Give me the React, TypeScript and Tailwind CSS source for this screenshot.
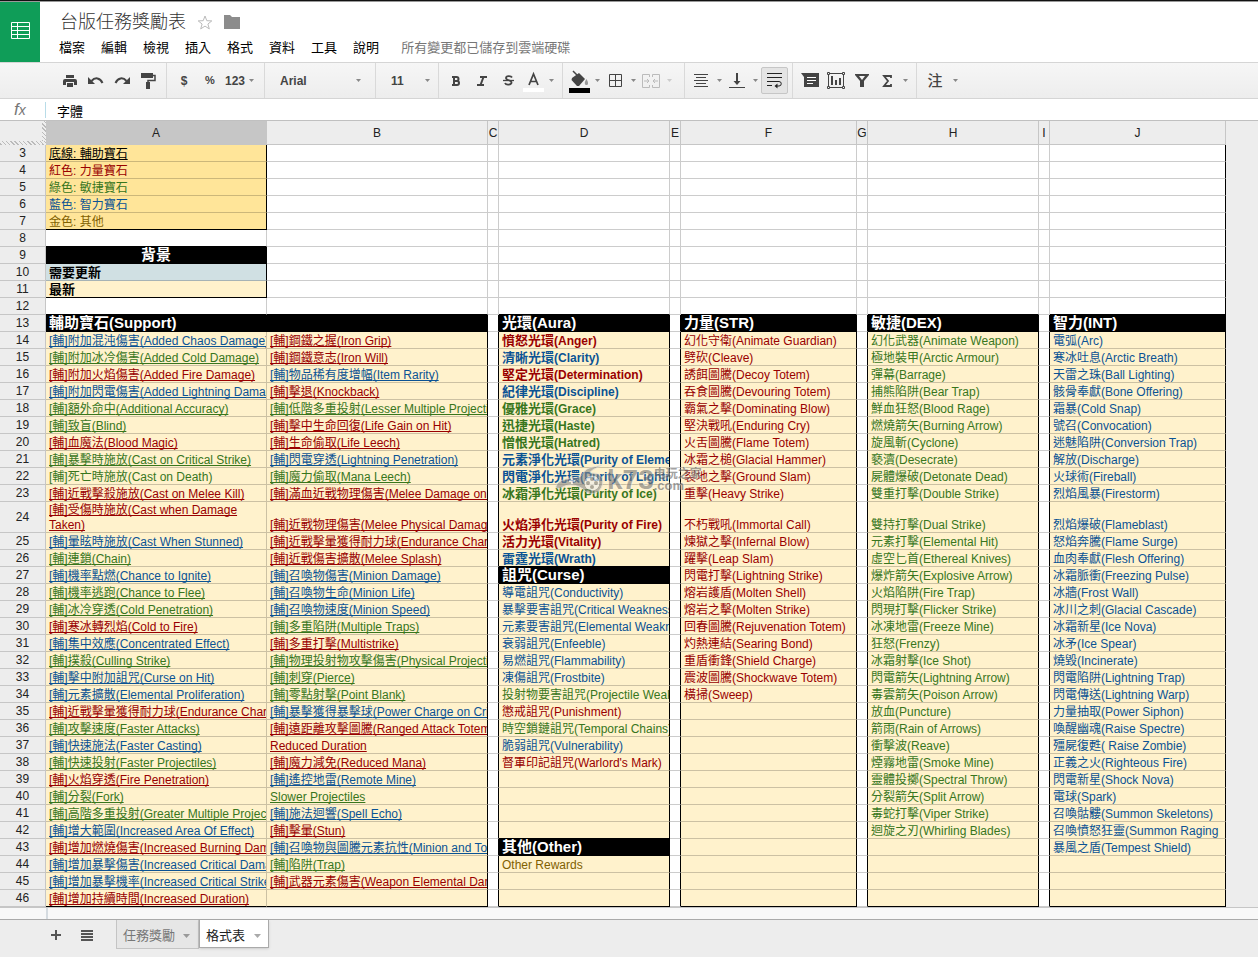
import type { ReactNode } from "react";

type Entry = string | null;

const FIRST_ROW = 3;
const LAST_ROW = 46;

const COLUMNS = [
  { name: "A", width: "w-[221px]" },
  { name: "B", width: "w-[221px]" },
  { name: "C", width: "w-[11px]" },
  { name: "D", width: "w-[171px]" },
  { name: "E", width: "w-[11px]" },
  { name: "F", width: "w-[176px]" },
  { name: "G", width: "w-[11px]" },
  { name: "H", width: "w-[171px]" },
  { name: "I", width: "w-[11px]" },
  { name: "J", width: "w-[176px]" },
];

// Entries start with a colour code: r = strength, g = dexterity, b = intelligence, y = other.
const INK: Record<string, string> = {
  r: "text-[#990000]",
  g: "text-[#38761d]",
  b: "text-[#0b5394]",
  y: "text-[#7f6000]",
  k: "text-black",
};

// Each list starts at row 14.
const SUPPORT_A: Entry[] = [
  "b[輔]附加混沌傷害(Added Chaos Damage)",
  "g[輔]附加冰冷傷害(Added Cold Damage)",
  "r[輔]附加火焰傷害(Added Fire Damage)",
  "b[輔]附加閃電傷害(Added Lightning Damage)",
  "g[輔]額外命中(Additional Accuracy)",
  "g[輔]致盲(Blind)",
  "r[輔]血魔法(Blood Magic)",
  "g[輔]暴擊時施放(Cast on Critical Strike)",
  "g[輔]死亡時施放(Cast on Death)",
  "r[輔]近戰擊殺施放(Cast on Melee Kill)",
  "r[輔]受傷時施放(Cast when Damage Taken)",
  "b[輔]暈眩時施放(Cast When Stunned)",
  "g[輔]連鎖(Chain)",
  "b[輔]機率點燃(Chance to Ignite)",
  "g[輔]機率逃跑(Chance to Flee)",
  "g[輔]冰冷穿透(Cold Penetration)",
  "r[輔]寒冰轉烈焰(Cold to Fire)",
  "b[輔]集中效應(Concentrated Effect)",
  "g[輔]撲殺(Culling Strike)",
  "b[輔]擊中附加詛咒(Curse on Hit)",
  "b[輔]元素擴散(Elemental Proliferation)",
  "r[輔]近戰擊暈獲得耐力球(Endurance Charge)",
  "g[輔]攻擊速度(Faster Attacks)",
  "b[輔]快速施法(Faster Casting)",
  "g[輔]快速投射(Faster Projectiles)",
  "r[輔]火焰穿透(Fire Penetration)",
  "g[輔]分裂(Fork)",
  "g[輔]高階多重投射(Greater Multiple Projectiles)",
  "b[輔]增大範圍(Increased Area Of Effect)",
  "r[輔]增加燃燒傷害(Increased Burning Damage)",
  "b[輔]增加暴擊傷害(Increased Critical Damage)",
  "b[輔]增加暴擊機率(Increased Critical Strikes)",
  "r[輔]增加持續時間(Increased Duration)",
];

const SUPPORT_B: Entry[] = [
  "r[輔]鋼鐵之握(Iron Grip)",
  "r[輔]鋼鐵意志(Iron Will)",
  "b[輔]物品稀有度增幅(Item Rarity)",
  "r[輔]擊退(Knockback)",
  "g[輔]低階多重投射(Lesser Multiple Projectiles)",
  "r[輔]擊中生命回復(Life Gain on Hit)",
  "r[輔]生命偷取(Life Leech)",
  "b[輔]閃電穿透(Lightning Penetration)",
  "g[輔]魔力偷取(Mana Leech)",
  "r[輔]滿血近戰物理傷害(Melee Damage on Full Life)",
  "r[輔]近戰物理傷害(Melee Physical Damage)",
  "r[輔]近戰擊暈獲得耐力球(Endurance Charge)",
  "r[輔]近戰傷害擴散(Melee Splash)",
  "b[輔]召喚物傷害(Minion Damage)",
  "b[輔]召喚物生命(Minion Life)",
  "b[輔]召喚物速度(Minion Speed)",
  "g[輔]多重陷阱(Multiple Traps)",
  "r[輔]多重打擊(Multistrike)",
  "g[輔]物理投射物攻擊傷害(Physical Projectile)",
  "g[輔]刺穿(Pierce)",
  "g[輔]零點射擊(Point Blank)",
  "b[輔]暴擊獲得暴擊球(Power Charge on Critical)",
  "r[輔]遠距離攻擊圖騰(Ranged Attack Totem)",
  "rReduced Duration",
  "r[輔]魔力減免(Reduced Mana)",
  "b[輔]遙控地雷(Remote Mine)",
  "gSlower Projectiles",
  "b[輔]施法迴響(Spell Echo)",
  "r[輔]擊暈(Stun)",
  "b[輔]召喚物與圖騰元素抗性(Minion and Totem)",
  "g[輔]陷阱(Trap)",
  "r[輔]武器元素傷害(Weapon Elemental Damage)",
];

const AURA_D: Entry[] = [
  "r憤怒光環(Anger)",
  "b清晰光環(Clarity)",
  "r堅定光環(Determination)",
  "b紀律光環(Discipline)",
  "g優雅光環(Grace)",
  "g迅捷光環(Haste)",
  "g憎恨光環(Hatred)",
  "b元素淨化光環(Purity of Elements)",
  "b閃電淨化光環(Purity of Lightning)",
  "g冰霜淨化光環(Purity of Ice)",
  "r火焰淨化光環(Purity of Fire)",
  "r活力光環(Vitality)",
  "b雷霆光環(Wrath)",
  "#詛咒(Curse)",
  "b導電詛咒(Conductivity)",
  "b暴擊要害詛咒(Critical Weakness)",
  "b元素要害詛咒(Elemental Weakness)",
  "b衰弱詛咒(Enfeeble)",
  "b易燃詛咒(Flammability)",
  "b凍傷詛咒(Frostbite)",
  "g投射物要害詛咒(Projectile Weakness)",
  "r懲戒詛咒(Punishment)",
  "g時空鎖鏈詛咒(Temporal Chains)",
  "b脆弱詛咒(Vulnerability)",
  "r督軍印記詛咒(Warlord's Mark)",
  null,
  null,
  null,
  null,
  "#其他(Other)",
  "yOther Rewards",
];

const STRENGTH_F: Entry[] = [
  "r幻化守衛(Animate Guardian)",
  "r劈砍(Cleave)",
  "r誘餌圖騰(Decoy Totem)",
  "r吞食圖騰(Devouring Totem)",
  "r霸氣之擊(Dominating Blow)",
  "r堅決戰吼(Enduring Cry)",
  "r火舌圖騰(Flame Totem)",
  "r冰霜之槌(Glacial Hammer)",
  "r裂地之擊(Ground Slam)",
  "r重擊(Heavy Strike)",
  "r不朽戰吼(Immortal Call)",
  "r煉獄之擊(Infernal Blow)",
  "r躍擊(Leap Slam)",
  "r閃電打擊(Lightning Strike)",
  "r熔岩護盾(Molten Shell)",
  "r熔岩之擊(Molten Strike)",
  "r回春圖騰(Rejuvenation Totem)",
  "r灼熱連結(Searing Bond)",
  "r重盾衝鋒(Shield Charge)",
  "r震波圖騰(Shockwave Totem)",
  "r橫掃(Sweep)",
];

const DEXTERITY_H: Entry[] = [
  "g幻化武器(Animate Weapon)",
  "g極地裝甲(Arctic Armour)",
  "g彈幕(Barrage)",
  "g捕熊陷阱(Bear Trap)",
  "g鮮血狂怒(Blood Rage)",
  "g燃燒箭矢(Burning Arrow)",
  "g旋風斬(Cyclone)",
  "g褻瀆(Desecrate)",
  "g屍體爆破(Detonate Dead)",
  "g雙重打擊(Double Strike)",
  "g雙持打擊(Dual Strike)",
  "g元素打擊(Elemental Hit)",
  "g虛空匕首(Ethereal Knives)",
  "g爆炸箭矢(Explosive Arrow)",
  "g火焰陷阱(Fire Trap)",
  "g閃現打擊(Flicker Strike)",
  "g冰凍地雷(Freeze Mine)",
  "g狂怒(Frenzy)",
  "g冰霜射擊(Ice Shot)",
  "g閃電箭矢(Lightning Arrow)",
  "g毒雲箭矢(Poison Arrow)",
  "g放血(Puncture)",
  "g箭雨(Rain of Arrows)",
  "g衝擊波(Reave)",
  "g煙霧地雷(Smoke Mine)",
  "g靈體投擲(Spectral Throw)",
  "g分裂箭矢(Split Arrow)",
  "g毒蛇打擊(Viper Strike)",
  "g迴旋之刃(Whirling Blades)",
];

const INTELLIGENCE_J: Entry[] = [
  "b電弧(Arc)",
  "b寒冰吐息(Arctic Breath)",
  "b天雷之珠(Ball Lighting)",
  "b骸骨奉獻(Bone Offering)",
  "b霜暴(Cold Snap)",
  "b號召(Convocation)",
  "b迷魅陷阱(Conversion Trap)",
  "b解放(Discharge)",
  "b火球術(Fireball)",
  "b烈焰風暴(Firestorm)",
  "b烈焰爆破(Flameblast)",
  "b怒焰奔騰(Flame Surge)",
  "b血肉奉獻(Flesh Offering)",
  "b冰霜脈衝(Freezing Pulse)",
  "b冰牆(Frost Wall)",
  "b冰川之刺(Glacial Cascade)",
  "b冰霜新星(Ice Nova)",
  "b冰矛(Ice Spear)",
  "b燒毀(Incinerate)",
  "b閃電陷阱(Lightning Trap)",
  "b閃電傳送(Lightning Warp)",
  "b力量抽取(Power Siphon)",
  "b喚醒幽魂(Raise Spectre)",
  "b殭屍復甦( Raise Zombie)",
  "b正義之火(Righteous Fire)",
  "b閃電新星(Shock Nova)",
  "b電球(Spark)",
  "b召喚骷髏(Summon Skeletons)",
  "b召喚憤怒狂靈(Summon Raging",
  "b暴風之盾(Tempest Shield)",
];

const LISTS: Record<string, Entry[]> = {
  A: SUPPORT_A,
  B: SUPPORT_B,
  D: AURA_D,
  F: STRENGTH_F,
  H: DEXTERITY_H,
  J: INTELLIGENCE_J,
};

const TITLES: Record<string, string> = {
  A: "#輔助寶石(Support)",
  D: "#光環(Aura)",
  F: "#力量(STR)",
  H: "#敏捷(DEX)",
  J: "#智力(INT)",
};

const LEGEND: Record<number, string> = {
  3: "k底線: 輔助寶石",
  4: "r紅色: 力量寶石",
  5: "g綠色: 敏捷寶石",
  6: "b藍色: 智力寶石",
  7: "y金色: 其他",
  9: "#背景",
  10: "k需要更新",
  11: "k最新",
};

function entryAt(col: string, row: number): Entry {
  if (row < 13) return col === "A" ? (LEGEND[row] ?? null) : null;
  if (row === 13) return TITLES[col] ?? null;
  return LISTS[col]?.[row - 14] ?? null;
}

function fillAt(col: string, row: number) {
  if (entryAt(col, row)?.startsWith("#")) return "bg-black";
  if (row >= 14) return LISTS[col] ? "bg-[#fff2cc]" : "bg-white";
  if (col === "A" && row <= 7) return "bg-[#ffe599]";
  if (col === "A" && row === 10) return "bg-[#d0e0e3]";
  if (col === "A" && row === 11) return "bg-[#fff2cc]";
  return "bg-white";
}

function bordersAt(col: string, row: number) {
  const boxed =
    (row >= 13 && col !== "A") ||
    (col === "A" && row <= 11 && row !== 8) ||
    (col === "J" && row < 13);
  const header = entryAt(col, row)?.startsWith("#");
  const aboveHeader =
    entryAt(col, row + 1)?.startsWith("#") || (row === 12 && col === "B");
  const closing =
    (col === "A" && (row === 7 || row === 11)) ||
    (row === LAST_ROW && LISTS[col] !== undefined);
  const right = boxed || header ? "border-r-black" : "border-r-black/20";
  const bottom =
    header || aboveHeader || closing ? "border-b-black" : "border-b-black/20";
  return `${right} ${bottom}`;
}

function CellText({ col, row }: { col: string; row: number }) {
  const entry = entryAt(col, row);
  if (!entry) return null;
  const kind = entry[0];
  const text = entry.slice(1);
  const cut = text.indexOf("(") < 0 ? text.length : text.indexOf("(");

  if (kind === "#") {
    return (
      <div
        className={`h-4 overflow-hidden px-[3px] text-[15px] leading-4 font-bold whitespace-nowrap text-white ${row === 9 ? "text-center" : ""}`}
      >
        {text}
      </div>
    );
  }
  const wraps = col === "A" && row === 24;
  const underlined =
    row === 3 || ((col === "A" || col === "B") && row > 13 && !(col === "A" && row === 22));
  const bold = (col === "D" && row < 27) || row === 10 || row === 11;
  return (
    <div
      className={`overflow-hidden px-[3px] text-[12px] ${wraps ? "h-[30px] pt-px leading-[15px]" : "h-4 leading-[18px] whitespace-nowrap"} ${INK[kind]} ${bold ? "font-bold" : ""}`}
    >
      <span
        className={
          underlined ? "underline underline-offset-1 [text-decoration-skip-ink:none]" : ""
        }
      >
        <span className={bold ? "text-[13px]" : ""}>{text.slice(0, cut)}</span>
        {text.slice(cut)}
      </span>
    </div>
  );
}

function Sheet() {
  const rows = Array.from({ length: LAST_ROW - FIRST_ROW + 1 }, (_, i) => i + FIRST_ROW);
  return (
    <table className="w-[1226px] table-fixed border-separate border-spacing-0">
      <colgroup>
        <col className="w-[46px]" />
        {COLUMNS.map((c) => (
          <col key={c.name} className={c.width} />
        ))}
      </colgroup>
      <thead>
        <tr className="h-6 text-[12px] leading-[14px] text-[#222]">
          <td className="border-r-4 border-b-4 border-transparent bg-[linear-gradient(#ededed,#ededed),repeating-linear-gradient(45deg,#bbb_0_1px,#eee_1px_3px)] [background-clip:padding-box,border-box] p-0" />
          {COLUMNS.map((c) => (
            <th
              key={c.name}
              scope="col"
              className={`border-r border-b border-[#c6c6c6] p-0 font-normal ${c.name === "A" ? "bg-[#c6c6c6]" : "bg-[#ededed]"}`}
            >
              {c.name}
            </th>
          ))}
        </tr>
      </thead>
      <tbody>
        {rows.map((row) => (
          <tr key={row} className={row === 24 ? "h-[31px]" : "h-[17px]"}>
            <th
              scope="row"
              className="border-r border-b border-[#c6c6c6] bg-[#ededed] p-0 text-center align-middle text-[12px] leading-[14px] font-normal text-[#222]"
            >
              {row}
            </th>
            {COLUMNS.filter((c) => !(row === 13 && c.name === "B")).map((c) => (
              <td
                key={c.name}
                colSpan={row === 13 && c.name === "A" ? 2 : 1}
                className={`border-r border-b p-0 align-bottom ${fillAt(c.name, row)} ${bordersAt(c.name, row)}`}
              >
                <CellText col={c.name} row={row} />
              </td>
            ))}
          </tr>
        ))}
      </tbody>
    </table>
  );
}

function Watermark() {
  return (
    <div className="pointer-events-none absolute top-[343px] left-[555px] flex items-center opacity-60">
      <svg width="52" height="32" viewBox="0 0 52 32" aria-hidden="true">
        <path
          d="M1 22 C3 16 12 14 24 13 C28 12 27 7 34 4 L47 1 C40 5 36 6 35 9 C45 8 50 14 47 22 C44 31 33 32 28 25 C20 20 13 20 8 23 C4 25 0 25 1 22Z"
          fill="#888"
          stroke="#ddd"
        />
        <circle cx="37" cy="19" r="8" fill="#eee" stroke="#777" />
        <circle cx="33" cy="19" r="2" fill="#777" />
        <circle cx="41" cy="19" r="2" fill="#777" />
        <circle cx="37" cy="15" r="2" fill="#777" />
        <circle cx="37" cy="23" r="2" fill="#777" />
        <path d="M17 14v6M14 17h6" stroke="#eee" strokeWidth="2" />
      </svg>
      <span className="text-[28px] leading-8 font-bold text-[#777] [text-shadow:0_0_2px_white,0_0_2px_white]">
        k73
      </span>
      <span className="flex flex-col font-bold text-[#666] [text-shadow:0_0_2px_white,0_0_2px_white]">
        <span className="text-[12px] leading-3">电玩之家</span>
        <span className="text-[13px] leading-3">.com</span>
      </span>
    </div>
  );
}

function Caret({ faded = false }: { faded?: boolean }) {
  return (
    <svg width="5" height="3" viewBox="0 0 5 3" aria-hidden="true">
      <path d="M0 0h5L2.500 3z" fill={faded ? "#ccc" : "#888"} />
    </svg>
  );
}

function Group({ children, className = "" }: { children: ReactNode; className?: string }) {
  return (
    <div className={`flex items-center border-r border-[#d9d9d9] ${className}`}>{children}</div>
  );
}

function Tool({ label, children }: { label: string; children: ReactNode }) {
  return (
    <button type="button" aria-label={label} className="flex h-7 w-[26px] items-center justify-center">
      {children}
    </button>
  );
}

function MenuTool({
  label,
  children,
  faded = false,
  wide = false,
}: {
  label: string;
  children: ReactNode;
  faded?: boolean;
  wide?: boolean;
}) {
  return (
    <button type="button" aria-label={label} className="flex h-7 items-center">
      <span className={`flex justify-center ${wide ? "w-7" : "w-6"}`}>{children}</span>
      <span className="flex w-3 justify-center">
        <Caret faded={faded} />
      </span>
    </button>
  );
}

function Toolbar() {
  return (
    <div className="flex h-9 border-b border-[#d5d5d5] bg-linear-to-b from-[#f6f6f6] to-[#ededed] text-[12px] font-bold text-[#444]">
      <Group className="pr-[5px] pl-[57px]">
        <Tool label="列印">
          <svg width="14" height="12" viewBox="0 0 14 12" fill="#444">
            <path d="M3 0h8v3H3zM2 4h10a2 2 0 0 1 2 2v4h-3V7H3v3H0V6a2 2 0 0 1 2-2zM4 8h6v4H4z" />
          </svg>
        </Tool>
        <Tool label="復原">
          <svg width="16" height="10" viewBox="0 0 16 10" fill="none">
            <path d="M0 1v7h7z" fill="#444" />
            <path d="M3.500 5C7 1 12 1.500 14.500 7" stroke="#444" strokeWidth="2" />
          </svg>
        </Tool>
        <Tool label="重做">
          <svg width="16" height="10" viewBox="0 0 16 10" fill="none">
            <path d="M16 1v7H9z" fill="#444" />
            <path d="M12.500 5C9 1 4 1.500 1.500 7" stroke="#444" strokeWidth="2" />
          </svg>
        </Tool>
        <Tool label="複製格式">
          <svg width="15" height="16" viewBox="0 0 15 16" fill="none">
            <path d="M0 0h12v5H0z" fill="#444" />
            <path d="M12 2.500h2V7.500H7V10" stroke="#444" strokeWidth="1.500" />
            <path d="M5 9h4v7H5z" fill="#444" />
          </svg>
        </Tool>
      </Group>
      <Group className="pl-1">
        <Tool label="貨幣格式">$</Tool>
        <Tool label="百分比格式">
          <span className="text-[11px]">%</span>
        </Tool>
        <button type="button" className="flex h-7 w-[41px] items-center gap-1 pl-[2px]">
          123 <Caret />
        </button>
      </Group>
      <Group className="relative">
        <select
          aria-label="字型"
          className="h-7 w-[110px] appearance-none bg-transparent pl-[15px] font-bold outline-none"
        >
          <option>Arial</option>
        </select>
        <span className="pointer-events-none absolute right-3.5 flex">
          <Caret />
        </span>
      </Group>
      <Group className="relative">
        <select
          aria-label="字型大小"
          className="h-7 w-[62px] appearance-none bg-transparent pl-[15px] font-bold outline-none"
        >
          <option>11</option>
        </select>
        <span className="pointer-events-none absolute right-2 flex">
          <Caret />
        </span>
      </Group>
      <Group className="pr-[5px] pl-1">
        <Tool label="粗體">
          <svg width="10" height="10" viewBox="0 0 10 10" fill="none">
            <path
              d="M1 1h4.500a1.800 1.800 0 0 1 0 4H3M3 5h3a2 2 0 0 1 0 4H1M3 1v8"
              stroke="#444"
              strokeWidth="2"
            />
          </svg>
        </Tool>
        <Tool label="斜體">
          <svg width="10" height="10" viewBox="0 0 10 10" fill="none">
            <path d="M3 1h7M0 9h7M6.500 1l-3 8" stroke="#444" strokeWidth="2" />
          </svg>
        </Tool>
        <Tool label="刪除線">
          <svg width="11" height="11" viewBox="0 0 11 11" fill="none">
            <path
              d="M9 2.500C8 .5 3 .5 3 3c0 3 5.500 1.500 5.500 4.500C8.500 10 3 10.500 2 8"
              stroke="#444"
              strokeWidth="1.800"
            />
            <path d="M0 5.500h11" stroke="#444" strokeWidth="1.300" />
          </svg>
        </Tool>
        <MenuTool label="文字顏色">
          <svg width="21" height="22" viewBox="0 0 21 22" fill="none">
            <path d="M6 15l4.500-11L15 15M7.500 11.500h6" stroke="#444" strokeWidth="1.700" />
            <path d="M0 18h21v4H0z" fill="#fff" />
          </svg>
        </MenuTool>
      </Group>
      <Group className="pr-[9px] pl-1">
        <MenuTool label="填滿顏色">
          <svg width="21" height="24" viewBox="0 0 21 24" fill="none">
            <path d="M3 9l7-5 6 6-6 7h-2L2.500 11z" fill="#444" />
            <path d="M4 2l6 6" stroke="#444" strokeWidth="1.500" />
            <path d="M17.500 10c-3 4-1.500 6 0 6s2.500-2 0-6z" fill="#999" />
            <path d="M0 19h21v5H0z" fill="#000" />
          </svg>
        </MenuTool>
        <MenuTool label="框線">
          <svg width="13" height="13" viewBox="0 0 13 13" fill="none" stroke="#444">
            <path d="M.5 .5h12v12H.5zM6.500 0v13M0 6.500h13" />
          </svg>
        </MenuTool>
        <MenuTool label="合併儲存格" faded>
          <svg width="18" height="14" viewBox="0 0 18 14" fill="none" stroke="#bbb">
            <path d="M7.500 3V.5h-7v13h7V11M10.500 3V.5h7v13h-7V11M2 7h5M11 7h5M5 5l2 2-2 2M13 5l-2 2 2 2" />
          </svg>
        </MenuTool>
      </Group>
      <Group className="px-1">
        <MenuTool label="水平對齊">
          <svg width="14" height="13" viewBox="0 0 14 13" stroke="#444">
            <path d="M0 .5h14M2 3.500h10M0 6.500h14M2 9.500h10M0 12.500h14" />
          </svg>
        </MenuTool>
        <MenuTool label="垂直對齊">
          <svg width="16" height="15" viewBox="0 0 16 15" fill="#444">
            <path d="M7 0h2v8h2.500L8 12 4.500 8H7zM0 14h16v1H0z" />
          </svg>
        </MenuTool>
        <button
          type="button"
          aria-label="自動換行"
          aria-pressed="true"
          className="flex h-[27px] w-[27px] items-center justify-center rounded-xs border border-[#c6c6c6] bg-[#e4e4e4]"
        >
          <svg width="15" height="17" viewBox="0 0 15 17" fill="none" stroke="#222">
            <path d="M0 1.500h15M0 5.500h15M0 9.500h12a2 2 0 0 1 0 4.500H9M0 13.500h5" />
            <path d="M10.500 11.500v5L7.500 14z" fill="#222" stroke="none" />
          </svg>
        </button>
      </Group>
      <Group className="pr-[5px] pl-1">
        <Tool label="插入註解">
          <svg width="18" height="15" viewBox="0 0 18 15" fill="none">
            <path d="M0 0h18v14H3V4z" fill="#444" />
            <path d="M6 4.500h9M6 7.500h9M6 10.500h6" stroke="#fff" />
          </svg>
        </Tool>
        <Tool label="插入圖表">
          <svg width="18" height="17" viewBox="0 0 18 17" fill="none" stroke="#444">
            <path d="M1.500 1.500h15v14h-15z" />
            <path d="M.5 .5h2v2h-2zM15.500 .5h2v2h-2zM.5 14.500h2v2h-2zM15.500 14.500h2v2h-2z" fill="#f2f2f2" />
            <path d="M5 4v9M9 8v5M13 6v7" strokeWidth="2" />
          </svg>
        </Tool>
        <Tool label="篩選器">
          <svg width="14" height="13" viewBox="0 0 14 13" fill="#444">
            <path d="M0 0h14v1L9 7v6H5V7L0 1zM4 2l3 4 3-4z" fillRule="evenodd" />
          </svg>
        </Tool>
        <MenuTool label="函式">
          <svg width="10" height="12" viewBox="0 0 10 12" fill="none" stroke="#444">
            <path d="M9 3V1H2l4 5-4 5h7V9" strokeWidth="1.800" />
          </svg>
        </MenuTool>
      </Group>
      <div className="flex items-center pl-1">
        <MenuTool label="輸入工具" wide>
          <span className="text-[15px] leading-4 font-medium">注</span>
        </MenuTool>
      </div>
    </div>
  );
}

const MENUS = ["檔案", "編輯", "檢視", "插入", "格式", "資料", "工具", "說明"];

function Header() {
  return (
    <header className="flex h-[61px] border-b border-[#d5d5d5] bg-white">
      <a href="#home" aria-label="試算表首頁" className="flex w-10 justify-center bg-[#0f9d58] pt-5">
        <svg width="19" height="17" viewBox="0 0 19 17" fill="none" stroke="#fff">
          <path d="M.5 .5h18v16H.5zM6.500 0v17M0 4.500h19M0 8.500h19M0 12.500h19" />
        </svg>
      </a>
      <div className="flex flex-col pt-2 pl-5">
        <div className="flex h-6 items-center gap-[11px]">
          <h1 className="text-[18px] leading-6 font-light text-[#333]">台版任務獎勵表</h1>
          <button type="button" aria-label="加上星號">
            <svg width="16" height="15" viewBox="0 0 16 15" fill="none" stroke="#bbb">
              <path d="M8 1l1.800 4.700 5 .2-3.900 3.100 1.400 4.900L8 11.100l-4.300 2.800 1.400-4.900L1.200 5.900l5-.2z" />
            </svg>
          </button>
          <button type="button" aria-label="移至資料夾">
            <svg width="16" height="14" viewBox="0 0 16 14" fill="#8c8c8c">
              <path d="M0 0h6l2 2h8v12H0z" />
            </svg>
          </button>
        </div>
        <nav className="-ml-px flex h-6 items-center gap-4 pt-1 text-[13px] text-black">
          {MENUS.map((m) => (
            <button key={m} type="button">
              {m}
            </button>
          ))}
          <span className="pl-[6px] text-[#777]">所有變更都已儲存到雲端硬碟</span>
        </nav>
      </div>
    </header>
  );
}

function Footer() {
  return (
    <footer className="flex flex-1 items-start border-t border-[#aaa] bg-[#ededed] pl-[51px] text-[13px]">
      <button type="button" aria-label="新增工作表" className="flex h-[30px] items-center">
        <svg width="10" height="10" viewBox="0 0 10 10" stroke="#555" strokeWidth="2">
          <path d="M5 0v10M0 5h10" />
        </svg>
      </button>
      <button type="button" aria-label="所有工作表" className="ml-5 flex h-[30px] items-center">
        <svg width="12" height="11" viewBox="0 0 12 11" stroke="#555" strokeWidth="2">
          <path d="M0 1h12M0 4h12M0 7h12M0 10h12" />
        </svg>
      </button>
      <div className="ml-[23px] flex">
        <button
          type="button"
          className="flex h-[29px] w-[83px] items-center justify-between border border-t-0 border-[#c4c4c4] bg-[#e6e6e6] pt-1 pr-2 pl-[6px] text-[#777]"
        >
          任務獎勵
          <svg width="7" height="4" viewBox="0 0 7 4" fill="#999" aria-hidden="true">
            <path d="M0 0h7L3.500 4z" />
          </svg>
        </button>
        <button
          type="button"
          className="flex h-7 w-[70px] items-center justify-between border border-t-0 border-[#aaa] bg-white pt-1 pr-[7px] pl-[6px] text-[#222] shadow-sm"
        >
          格式表
          <svg width="7" height="4" viewBox="0 0 7 4" fill="#aaa" aria-hidden="true">
            <path d="M0 0h7L3.500 4z" />
          </svg>
        </button>
      </div>
    </footer>
  );
}

export default function App() {
  return (
    <div className="flex min-h-screen flex-col bg-white font-['Liberation_Sans','Noto_Sans_CJK_TC',sans-serif]">
      <div className="h-[2px] border-b border-[#999] bg-[#111]" />
      <Header />
      <Toolbar />
      <div className="flex h-[22px] items-center border-b border-[#c0c0c0] bg-white">
        <span className="w-[45px] pl-[14px] text-[17px] leading-5 text-[#777] italic">
          f<span className="text-[14px]">x</span>
        </span>
        <input
          aria-label="公式列"
          defaultValue="字體"
          className="h-4 flex-1 border-l border-[#b8dce8] pt-[2px] pl-[11px] text-[13px] leading-[14px] text-black outline-none"
        />
      </div>
      <main className="relative overflow-hidden border-b border-[#c6c6c6] bg-[#ededed]">
        <Sheet />
        <Watermark />
      </main>
      <div className="flex h-[11px] bg-[#f8f8f8]">
        <div className="w-12 border-r-2 border-[#d5dbe0]" />
      </div>
      <Footer />
    </div>
  );
}
